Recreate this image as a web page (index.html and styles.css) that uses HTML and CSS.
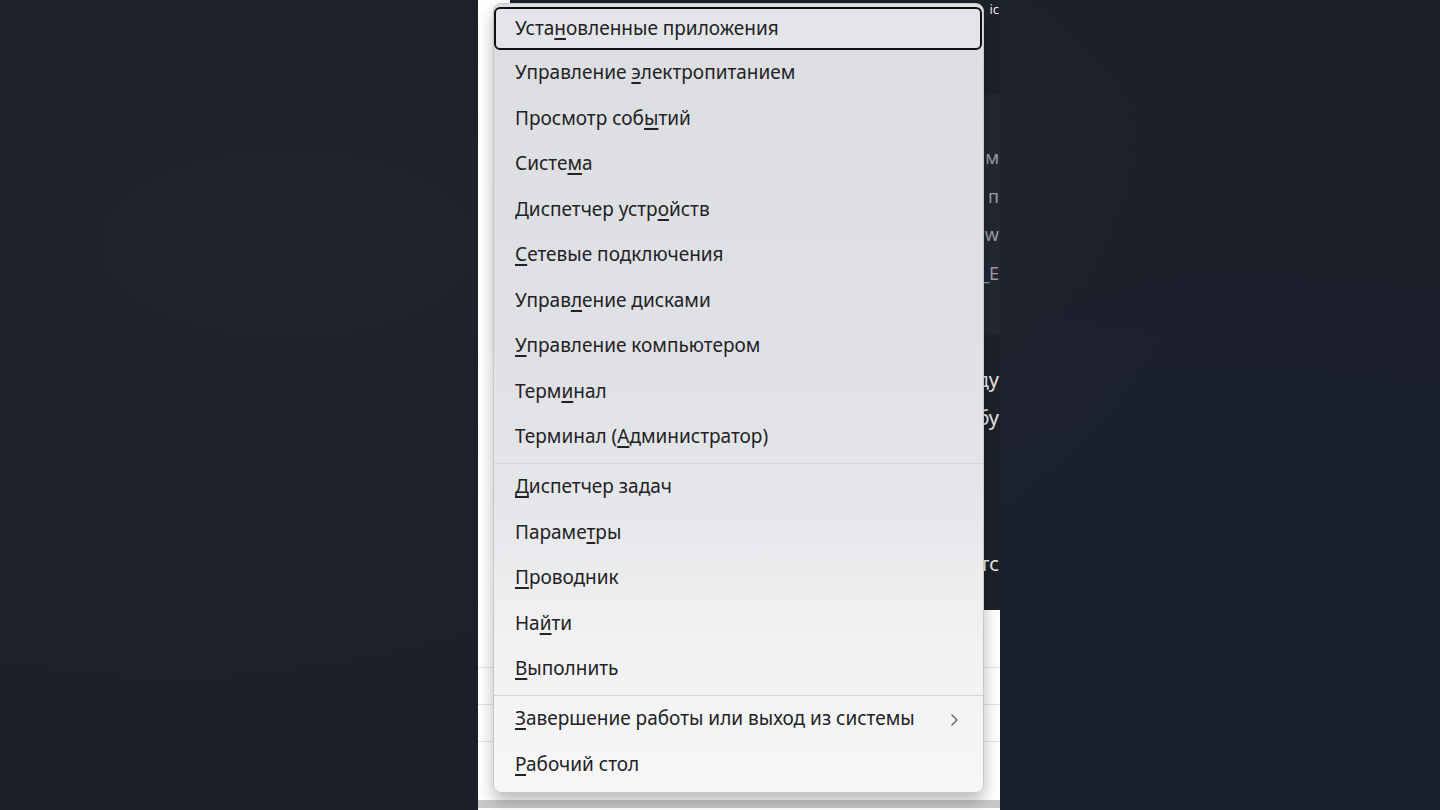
FILE: index.html
```html
<!DOCTYPE html>
<html lang="ru">
<head>
    <meta charset="UTF-8">
    <meta name="viewport" content="width=device-width, initial-scale=1.0">
    <title>Меню Win+X</title>
    <link rel="stylesheet" href="styles.css">
</head>
<body>
    <div class="screen">
        <div class="page">
            <div class="dark-block">
                <div class="top-line"><span>ic</span></div>
                <div class="code-panel">
                    <div class="code-line"><span>м</span></div>
                    <div class="code-line"><span>п</span></div>
                    <div class="code-line"><span>w</span></div>
                    <div class="code-line"><span>_E</span></div>
                </div>
                <div class="text-line first"><span>ду</span></div>
                <div class="text-line"><span>бу</span></div>
                <div class="text-line last"><span>тс</span></div>
            </div>
            <div class="table">
                <div class="table-row tall"></div>
                <div class="table-row"></div>
                <div class="table-row"></div>
                <div class="table-row end"></div>
            </div>

            <div class="menu">
                <div class="menu-item focused"><span class="label">Уста<u>н</u>овленные приложения</span></div>
                <div class="menu-item"><span class="label">Управление <u>э</u>лектропитанием</span></div>
                <div class="menu-item"><span class="label">Просмотр соб<u>ы</u>тий</span></div>
                <div class="menu-item"><span class="label">Систе<u>м</u>а</span></div>
                <div class="menu-item"><span class="label">Диспетчер устр<u>о</u>йств</span></div>
                <div class="menu-item"><span class="label"><u>С</u>етевые подключения</span></div>
                <div class="menu-item"><span class="label">Управ<u>л</u>ение дисками</span></div>
                <div class="menu-item"><span class="label"><u>У</u>правление компьютером</span></div>
                <div class="menu-item"><span class="label">Терм<u>и</u>нал</span></div>
                <div class="menu-item"><span class="label">Терминал (<u>А</u>дминистратор)</span></div>
                <div class="menu-sep"></div>
                <div class="menu-item"><span class="label"><u>Д</u>испетчер задач</span></div>
                <div class="menu-item"><span class="label">Параме<u>т</u>ры</span></div>
                <div class="menu-item"><span class="label"><u>П</u>роводник</span></div>
                <div class="menu-item"><span class="label">На<u>й</u>ти</span></div>
                <div class="menu-item"><span class="label"><u>В</u>ыполнить</span></div>
                <div class="menu-sep"></div>
                <div class="menu-item has-sub">
                    <span class="label"><u>З</u>авершение работы или выход из системы</span>
                    <svg class="chevron" width="9" height="14" viewBox="0 0 9 14">
                        <polyline points="1.5,1.5 7,7 1.5,12.5" fill="none" stroke="#5e5e62" stroke-width="1.3"/>
                    </svg>
                </div>
                <div class="menu-item"><span class="label"><u>Р</u>абочий стол</span></div>
            </div>
        </div>
    </div>
</body>
</html>
```

FILE: styles.css
```css
html, body {
    margin: 0;
    padding: 0;
}
body {
    width: 1440px;
    height: 810px;
    overflow: hidden;
    background-color: #1b2029;
    background-image:
        radial-gradient(ellipse at 20% 30%, #1e232c 0%, rgba(30, 35, 44, 0) 55%),
        radial-gradient(ellipse at 85% 80%, #1a2030 0%, rgba(26, 32, 48, 0) 60%);
    font-family: "Noto Sans", "Open Sans", sans-serif;
}
.screen {
    display: flex;
    height: 810px;
}
.page {
    position: relative;
    width: 522px;
    height: 810px;
    margin-left: 478px;
    background: #fff;
    overflow: hidden;
}

/* content behind the menu */
.dark-block {
    margin-left: 32px;
    height: 610px;
    background: #1d2129;
    display: flex;
    flex-direction: column;
    color: #e9e9ea;
}
.top-line,
.code-line,
.text-line {
    display: flex;
    justify-content: flex-end;
    white-space: nowrap;
}
.top-line {
    height: 18px;
    padding-top: 1px;
    box-sizing: border-box;
    font-size: 13px;
    line-height: 16px;
}
.top-line span,
.code-line span,
.text-line span {
    margin-right: 1px;
}
.code-panel {
    margin-top: 77px;
    height: 240px;
    padding-top: 43px;
    box-sizing: border-box;
    background: #242831;
    color: #9da1a8;
    font-size: 18px;
    line-height: 38.5px;
}
.text-line {
    font-size: 20px;
    line-height: 38px;
}
.text-line.first {
    margin-top: 26px;
}
.text-line.last {
    margin-top: 108px;
}

.table {
    display: flex;
    flex-direction: column;
}
.table-row {
    height: 36px;
    border-bottom: 1px solid #e2e2e4;
}
.table-row.tall {
    height: 57px;
}
.table-row.end {
    height: 58px;
    border-bottom: 8px solid #c9c9cc;
}

/* Win+X menu */
.menu {
    position: absolute;
    left: 15px;
    top: 3px;
    width: 491px;
    box-sizing: border-box;
    padding: 2px 0 3px;
    border: 1px solid #c6c7cb;
    border-radius: 8px;
    background: linear-gradient(180deg, #dddee2 0%, #e0e1e5 45%, #e6e7ea 65%, #f1f1f3 80%, #f7f7f8 100%);
    box-shadow: 0 8px 16px rgba(0, 0, 0, 0.28);
    color: #222224;
}
.menu-item {
    display: flex;
    align-items: center;
    height: 45.5px;
    padding: 0 22px 4px 21px;
    box-sizing: border-box;
    font-size: 19px;
}
.menu-item u {
    text-decoration-thickness: 1.5px;
    text-underline-offset: 3px;
}
.menu-item.focused {
    height: 43px;
    margin: 1px 1px 1.5px 0;
    padding-left: 19px;
    padding-bottom: 2px;
    border: 2px solid #111;
    border-radius: 6px;
    background: #e4e5e8;
}
.menu-sep {
    height: 4.5px;
    display: flex;
    align-items: center;
}
.menu-sep::after {
    content: "";
    flex: 1;
    height: 1px;
    background: #d2d3d7;
}
.menu-item.has-sub {
    justify-content: space-between;
}
.chevron {
    margin-right: 2px;
    margin-top: 3px;
}
```
